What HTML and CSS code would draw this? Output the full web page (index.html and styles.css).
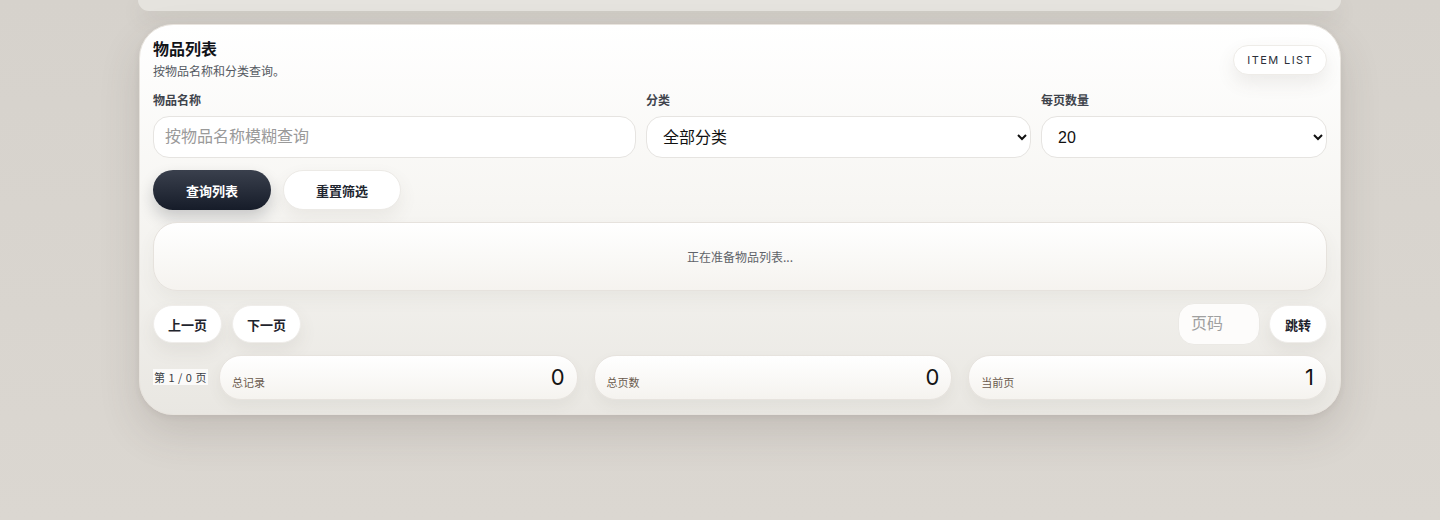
FILE: index.html
```html
<!DOCTYPE html>
<html lang="zh-CN">
<head>
<meta charset="utf-8">
<title>物品列表</title>
<link rel="stylesheet" href="styles.css">
</head>
<body>
<div class="page">
  <div class="prev-card"></div>
  <section class="card">
    <header class="card-head">
      <div class="titles">
        <h2 class="title">物品列表</h2>
        <p class="subtitle">按物品名称和分类查询。</p>
      </div>
      <span class="tag">ITEM LIST</span>
    </header>

    <div class="filters">
      <label class="field">
        <span class="field-label">物品名称</span>
        <input class="control" type="text" placeholder="按物品名称模糊查询">
      </label>
      <label class="field">
        <span class="field-label">分类</span>
        <select class="control select">
          <option>全部分类</option>
        </select>
      </label>
      <label class="field">
        <span class="field-label">每页数量</span>
        <select class="control select">
          <option>20</option>
        </select>
      </label>
    </div>

    <div class="actions">
      <button class="btn btn-dark">查询列表</button>
      <button class="btn btn-light">重置筛选</button>
    </div>

    <div class="list-box">正在准备物品列表...</div>

    <div class="pager">
      <div class="pager-left">
        <button class="pill">上一页</button>
        <button class="pill">下一页</button>
      </div>
      <div class="pager-right">
        <input class="page-input" type="text" placeholder="页码">
        <button class="pill jump">跳转</button>
      </div>
    </div>

    <div class="stats-row">
      <span class="page-info">第 1 / 0 页</span>
      <div class="stats">
        <div class="stat"><span class="stat-label">总记录</span><span class="stat-value">0</span></div>
        <div class="stat"><span class="stat-label">总页数</span><span class="stat-value">0</span></div>
        <div class="stat"><span class="stat-label">当前页</span><span class="stat-value">1</span></div>
      </div>
    </div>
  </section>
</div>
</body>
</html>
```

FILE: styles.css
```css
* { box-sizing: border-box; }

html, body {
  margin: 0;
  height: 100%;
}

body {
  background: linear-gradient(180deg, #d6d2cc 0%, #dbd7d1 100%);
  font-family: "Inter", "Noto Sans CJK SC", sans-serif;
  color: #161a22;
  overflow: hidden;
}

.page {
  padding-left: 139px;
  width: 1341px;
}

.prev-card {
  height: 11px;
  margin-left: -1px;
  border-radius: 0 0 32px 32px;
  background: #e5e3de;
  box-shadow: 0 8px 20px rgba(90, 80, 70, 0.12);
}

.card {
  margin-top: 13px;
  height: 391px;
  border-radius: 34px;
  background: linear-gradient(180deg, #ffffff 0%, #f7f6f3 45%, #e9e7e2 100%);
  border: 1px solid #e8e4de;
  box-shadow: 0 18px 40px rgba(80, 70, 60, 0.16), 0 2px 6px rgba(80, 70, 60, 0.08);
  padding: 12px 13px 0 13px;
  display: flex;
  flex-direction: column;
}

.card-head {
  display: flex;
  justify-content: space-between;
  align-items: flex-start;
}

.title {
  margin: 0;
  font-size: 16px;
  line-height: 24px;
  font-weight: 700;
  color: #111318;
}

.subtitle {
  margin: 3px 0 0;
  font-size: 12px;
  line-height: 16px;
  color: #555a62;
}

.tag {
  margin-top: 8px;
  height: 30px;
  padding: 0 13px;
  border-radius: 15px;
  background: #fff;
  border: 1px solid #eeece8;
  display: inline-flex;
  align-items: center;
  font-size: 11px;
  letter-spacing: 1.4px;
  color: #2b303a;
  box-shadow: 0 8px 18px rgba(90, 80, 70, 0.1);
}

.filters {
  display: grid;
  grid-template-columns: 483fr 385fr 286fr;
  gap: 10px;
  margin-top: 13px;
}

.field {
  display: flex;
  flex-direction: column;
}

.field-label {
  font-size: 12px;
  line-height: 16px;
  font-weight: 600;
  color: #40444c;
  margin-bottom: 7px;
}

.control {
  height: 42px;
  border-radius: 16px;
  border: 1px solid #e6e4e1;
  background: #fff;
  font-family: "Liberation Sans", "Noto Sans CJK SC", sans-serif;
  font-size: 16px;
  color: #111;
  padding: 0 11px;
  outline: none;
}

.control::placeholder {
  color: #9a9a9a;
  font-family: "Noto Sans CJK SC", sans-serif;
}

.select {
  padding: 0 10px 0 12px;
}

.actions {
  display: flex;
  gap: 12px;
  margin-top: 12px;
}

.btn {
  width: 118px;
  height: 40px;
  border-radius: 20px;
  font-family: "Noto Sans CJK SC", sans-serif;
  font-size: 13px;
  font-weight: 600;
  cursor: pointer;
}

.btn-dark {
  border: none;
  color: #fff;
  background: linear-gradient(180deg, #3a404d 0%, #161c29 100%);
  box-shadow: 0 8px 16px rgba(20, 25, 35, 0.2);
}

.btn-light {
  border: 1px solid #eceae6;
  background: #fff;
  color: #222731;
  box-shadow: 0 8px 18px rgba(90, 80, 70, 0.08);
}

.list-box {
  margin-top: 12px;
  height: 69px;
  border-radius: 24px;
  border: 1px solid #e6e2dd;
  background: linear-gradient(180deg, #ffffff 0%, #f5f3ef 100%);
  display: flex;
  align-items: center;
  justify-content: center;
  font-family: "Noto Sans CJK SC", sans-serif;
  font-size: 12px;
  color: #606369;
  box-shadow: 0 8px 18px rgba(90, 80, 70, 0.06);
}

.pager {
  display: flex;
  justify-content: space-between;
  align-items: center;
  margin-top: 12px;
}

.pager-left, .pager-right {
  display: flex;
  align-items: center;
  gap: 10px;
}

.pager-right { gap: 9px; }

.pill {
  height: 38px;
  padding: 0 14px;
  border-radius: 19px;
  border: 1px solid #efedea;
  background: #fff;
  font-family: "Noto Sans CJK SC", sans-serif;
  font-size: 13px;
  font-weight: 600;
  color: #1f242d;
  box-shadow: 0 8px 18px rgba(90, 80, 70, 0.08);
  cursor: pointer;
}

.jump { padding: 0 15px; }

.page-input {
  flex-shrink: 0;
  width: 82px;
  height: 42px;
  border-radius: 16px;
  border: 1px solid #ebe9e5;
  background: #fdfcfb;
  padding: 0 12px;
  font-size: 16px;
  outline: none;
}

.page-input::placeholder {
  color: #a0a0a0;
  font-family: "Noto Sans CJK SC", sans-serif;
}

.stats-row {
  display: flex;
  align-items: center;
  gap: 11px;
  margin-top: 10px;
}

.page-info {
  font-family: "Noto Sans CJK SC", sans-serif;
  font-size: 11px;
  line-height: 16px;
  letter-spacing: 0.5px;
  color: #3a3d44;
  background: #fbfaf9;
  padding: 0 1px;
  margin-top: -2px;
}

.stats {
  flex: 1;
  display: grid;
  grid-template-columns: repeat(3, 1fr);
  gap: 16px;
}

.stat {
  height: 45px;
  border-radius: 22px;
  border: 1px solid #e7e3de;
  background: linear-gradient(180deg, #ffffff 0%, #f5f3ef 100%);
  display: flex;
  align-items: center;
  justify-content: space-between;
  padding: 0 12px 0 12px;
  box-shadow: 0 6px 14px rgba(90, 80, 70, 0.06);
}

.stat-label {
  margin-top: 8px;
  font-family: "Noto Sans CJK SC", sans-serif;
  font-size: 11px;
  color: #6a5a4d;
}

.stat-value {
  font-family: "Inter", sans-serif;
  font-size: 22px;
  color: #141414;
  margin-top: -1px;
}
```
